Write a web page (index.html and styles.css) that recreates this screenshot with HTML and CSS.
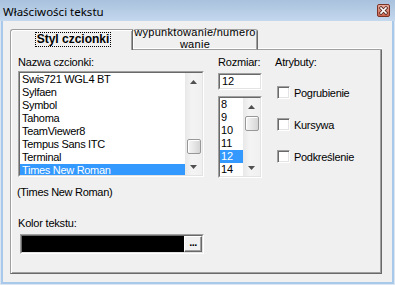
FILE: index.html
```html
<!DOCTYPE html>
<html lang="pl">
<head>
<meta charset="utf-8">
<title>Właściwości tekstu</title>
<link rel="stylesheet" href="styles.css">
</head>
<body>
<div class="window">
  <div class="titlebar">
    <span class="title">Właściwości tekstu</span>
    <svg class="close" width="13" height="13" viewBox="0 0 13 13">
      <defs>
        <linearGradient id="cg" x1="0" y1="0" x2="0" y2="1">
          <stop offset="0" stop-color="#eab1a3"/>
          <stop offset="1" stop-color="#c9604a"/>
        </linearGradient>
      </defs>
      <rect x="0.5" y="0.5" width="12" height="12" rx="1.5" fill="url(#cg)" stroke="#7c3326"/>
      <path d="M4 4 L9 9 M9 4 L4 9" stroke="#5a2a22" stroke-width="3.2" stroke-linecap="square"/>
      <path d="M4 4 L9 9 M9 4 L4 9" stroke="#ffffff" stroke-width="1.6" stroke-linecap="square"/>
    </svg>
  </div>
  <div class="client">
    <div class="tabs">
      <div class="tab tab-active"><span class="focus">Styl czcionki</span></div>
      <div class="tab tab-idle"><span class="tab2-text">wypunktowanie/numero</span><span class="tab2-text">wanie</span></div>
      <div class="tabs-fill"></div>
    </div>
    <div class="panel">
      <div class="top-row">
        <div class="col col-font">
          <div class="lbl">Nazwa czcionki:</div>
          <div class="listbox listbox-font">
            <div class="lb-in">
              <ul class="items">
                <li>Swis721 WGL4 BT</li>
                <li>Sylfaen</li>
                <li>Symbol</li>
                <li>Tahoma</li>
                <li>TeamViewer8</li>
                <li>Tempus Sans ITC</li>
                <li>Terminal</li>
                <li class="sel">Times New Roman</li>
              </ul>
              <div class="sb">
                <div class="sb-btn"><svg width="7" height="4" viewBox="0 0 7 4"><path d="M3.5 0 L7 4 H0 Z" fill="#505050"/></svg></div>
                <div class="sb-track"><div class="thumb thumb-font"></div></div>
                <div class="sb-btn"><svg width="7" height="4" viewBox="0 0 7 4"><path d="M0 0 H7 L3.5 4 Z" fill="#505050"/></svg></div>
              </div>
            </div>
          </div>
        </div>
        <div class="col col-size">
          <div class="lbl">Rozmiar:</div>
          <div class="edit"><div class="edit-in">12</div></div>
          <div class="listbox listbox-size">
            <div class="lb-in">
              <ul class="items items-size">
                <li>8</li>
                <li>9</li>
                <li>10</li>
                <li>11</li>
                <li class="sel">12</li>
                <li>14</li>
              </ul>
              <div class="sb">
                <div class="sb-btn"><svg width="7" height="4" viewBox="0 0 7 4"><path d="M3.5 0 L7 4 H0 Z" fill="#505050"/></svg></div>
                <div class="sb-track"><div class="thumb thumb-size"></div></div>
                <div class="sb-btn"><svg width="7" height="4" viewBox="0 0 7 4"><path d="M0 0 H7 L3.5 4 Z" fill="#505050"/></svg></div>
              </div>
            </div>
          </div>
        </div>
        <div class="col col-attr">
          <div class="lbl">Atrybuty:</div>
          <div class="chk chk-first"><span class="box"></span><span>Pogrubienie</span></div>
          <div class="chk"><span class="box"></span><span>Kursywa</span></div>
          <div class="chk"><span class="box"></span><span>Podkreślenie</span></div>
        </div>
      </div>
      <div class="preview">(Times New Roman)</div>
      <div class="lbl lbl-color">Kolor tekstu:</div>
      <div class="colorbox">
        <div class="cb-in">
          <div class="swatch"></div>
          <div class="dots">...</div>
        </div>
      </div>
    </div>
  </div>
</div>
</body>
</html>
```

FILE: styles.css
```css
html, body {
  margin: 0;
  padding: 0;
  background: #f0f0f0;
}

body {
  font-family: "Liberation Sans", Arial, sans-serif;
  font-size: 11px;
  color: #000;
}

.window {
  width: 395px;
  height: 285px;
  box-sizing: border-box;
  background: #f0f0f0;
  display: flex;
  flex-direction: column;
  box-shadow: inset 1px 0 #dbe6f2, inset -1px -1px #dbe6f2, inset 3px 0 #a9c9ea, inset -3px -3px #a9c9ea;
}

.titlebar {
  flex: none;
  height: 21px;
  box-sizing: border-box;
  display: flex;
  align-items: center;
  justify-content: space-between;
  padding: 0 5px 0 3px;
  background: linear-gradient(#a9c1dd, #c4d8ee);
}

.title {
  font-family: "Noto Sans", "Open Sans", sans-serif;
  font-size: 11.5px;
  line-height: 14px;
  padding-top: 2px;
}

.close {
  display: block;
  flex: none;
}

.client {
  flex: 1;
  display: flex;
  flex-direction: column;
  padding: 8px 13px 11px 10px;
  min-height: 0;
}

.tabs {
  flex: none;
  display: flex;
  height: 21px;
}

.tab {
  box-sizing: border-box;
  height: 21px;
}

.tab-active {
  width: 123px;
  border-left: 1px solid #a0a0a0;
  border-top: 1px solid #a0a0a0;
  border-right: 1px solid #696969;
  border-top-left-radius: 3px;
  box-shadow: inset 1px 1px #fff, inset -1px 0 #a0a0a0;
  display: flex;
  justify-content: center;
  align-items: flex-start;
  padding-top: 2px;
  padding-left: 3px;
}

.focus {
  font-weight: bold;
  font-size: 12px;
  line-height: 13px;
  border: 1px dotted #000;
  padding: 0 1px;
}

.tab-idle {
  width: 125px;
  border-top: 1px solid #a0a0a0;
  border-right: 1px solid #696969;
  border-bottom: 1px solid #a0a0a0;
  border-top-right-radius: 3px;
  border-top-left-radius: 3px;
  box-shadow: inset 1px 1px #fff, inset -1px 0 #a0a0a0, inset 0 -1px #fff;
  display: flex;
  flex-direction: column;
  align-items: center;
}

.tab2-text {
  display: block;
  line-height: 12px;
  white-space: nowrap;
  letter-spacing: 0.3px;
}

.tab2-text:first-child {
  margin-top: -4px;
}

.tabs-fill {
  flex: 1;
  box-sizing: border-box;
  border-bottom: 1px solid #a0a0a0;
  box-shadow: inset 0 -1px #fff;
}

.panel {
  flex: 1;
  min-height: 0;
  box-sizing: border-box;
  border-left: 1px solid #a0a0a0;
  border-right: 1px solid #696969;
  border-bottom: 1px solid #696969;
  box-shadow: inset 1px 0 #fff, inset -1px -1px #a0a0a0;
  padding: 6px 0 0 7px;
}

.top-row {
  display: flex;
  align-items: flex-start;
}

.col-font {
  width: 186px;
}

.col-size {
  width: 44px;
  margin-left: 14px;
}

.col-attr {
  margin-left: 13px;
}

.lbl {
  height: 13px;
  line-height: 13px;
  letter-spacing: -0.2px;
  white-space: nowrap;
}

.listbox,
.edit,
.colorbox {
  box-sizing: border-box;
  border: 1px solid;
  border-color: #a0a0a0 #fff #fff #a0a0a0;
}

.lb-in,
.edit-in,
.cb-in {
  box-sizing: border-box;
  height: 100%;
  border: 1px solid;
  border-color: #696969 #e3e3e3 #e3e3e3 #696969;
  background: #fff;
}

.lb-in {
  display: flex;
}

.listbox-font {
  margin-top: 2px;
  height: 106px;
}

.listbox-size {
  margin-top: 6px;
  height: 82px;
}

.items {
  flex: 1;
  min-width: 0;
  margin: 0;
  padding: 0;
  list-style: none;
  overflow: hidden;
}

.items li {
  height: 13px;
  line-height: 13px;
  padding-left: 2px;
  white-space: nowrap;
  letter-spacing: -0.3px;
}

.items-size li {
  padding-left: 1px;
  letter-spacing: 0;
}

.items li.sel {
  background: #3399ff;
  color: #fff;
}

.sb {
  flex: none;
  width: 17px;
  display: flex;
  flex-direction: column;
  background: linear-gradient(to right, #e8e8e8, #f4f4f4 40%, #f0f0f0);
}

.sb-btn {
  flex: none;
  height: 17px;
  display: flex;
  align-items: center;
  justify-content: center;
}

.sb-btn svg {
  display: block;
}

.sb-track {
  flex: 1;
  min-height: 0;
}

.thumb {
  height: 15px;
  margin: 0 1px 0 2px;
  box-sizing: border-box;
  border: 1px solid #989898;
  border-radius: 2px;
  background: linear-gradient(to right, #f6f6f6, #e6e6e6 50%, #d5d5d5);
  box-shadow: inset 1px 1px #fff;
}

.thumb-font {
  margin-top: 49px;
}

.thumb-size {
  margin-top: 1px;
}

.edit {
  margin-top: 4px;
  height: 17px;
}

.edit-in {
  line-height: 13px;
  padding-left: 2px;
}

.chk {
  display: flex;
  align-items: center;
  height: 13px;
  margin-top: 19px;
  white-space: nowrap;
  letter-spacing: -0.3px;
}

.chk-first {
  margin-top: 17px;
}

.box {
  flex: none;
  width: 13px;
  height: 13px;
  box-sizing: border-box;
  border: 1px solid;
  border-color: #a0a0a0 #fff #fff #a0a0a0;
  background: #fff;
  box-shadow: inset 1px 1px #696969, inset -1px -1px #e3e3e3;
  margin-left: 2px;
  margin-right: 4px;
}

.preview {
  margin-top: 8px;
  margin-left: -1px;
  height: 13px;
  line-height: 13px;
  letter-spacing: -0.3px;
}

.lbl-color {
  margin-top: 18px;
}

.colorbox {
  margin-top: 4px;
  margin-left: 2px;
  width: 184px;
  height: 20px;
}

.cb-in {
  display: flex;
}

.swatch {
  flex: 1;
  background: #000;
}

.dots {
  flex: none;
  width: 18px;
  box-sizing: border-box;
  border: 1px solid;
  border-color: #fff #696969 #696969 #fff;
  box-shadow: inset -1px -1px #a0a0a0;
  background: #f0f0f0;
  font-weight: bold;
  line-height: 11px;
  text-align: center;
  letter-spacing: -0.5px;
}
```
